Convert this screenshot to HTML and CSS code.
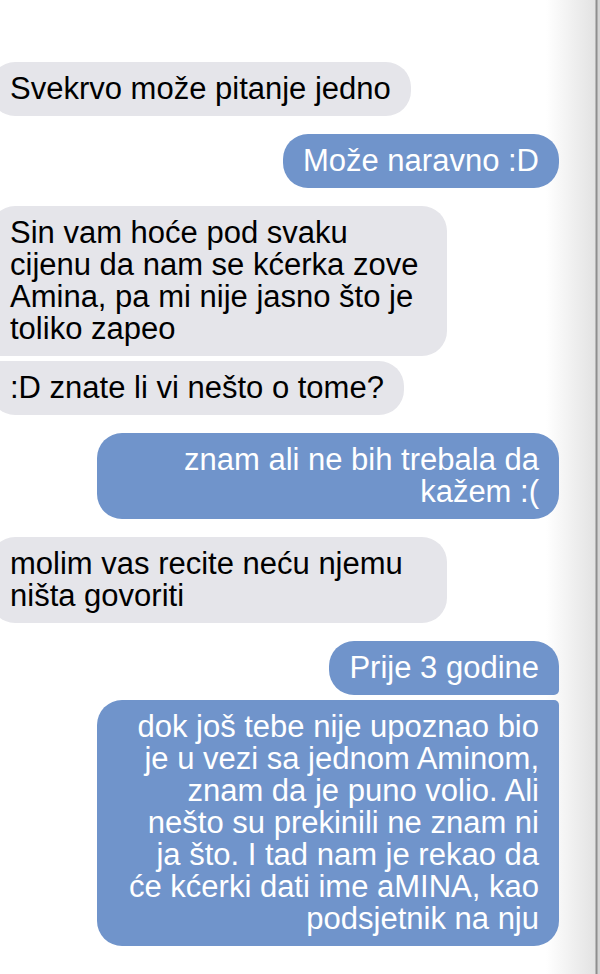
FILE: index.html
```html
<!DOCTYPE html>
<html lang="hr">

<head>
    <meta charset="UTF-8">
    <meta name="viewport" content="width=device-width, initial-scale=1.0">
    <title>Svekrva</title>
    <link rel="stylesheet" href="styles.css">
</head>

<body>
    <div class="chat">
        <div class="msg them">Svekrvo može pitanje jedno</div>
        <div class="msg me">Može naravno :D</div>
        <div class="msg them first">Sin vam hoće pod svaku cijenu da nam se kćerka zove Amina, pa mi nije jasno što je toliko zapeo</div>
        <div class="msg them last">:D znate li vi nešto o tome?</div>
        <div class="msg me">znam ali ne bih trebala da kažem :(</div>
        <div class="msg them">molim vas recite neću njemu ništa govoriti</div>
        <div class="msg me first">Prije 3 godine</div>
        <div class="msg me last">dok još tebe nije upoznao bio je u vezi sa jednom Aminom, znam da je puno volio. Ali nešto su prekinili ne znam ni ja što. I tad nam je rekao da će kćerki dati ime aMINA, kao podsjetnik na nju</div>
    </div>
</body>

</html>
```

FILE: styles.css
```css
html {
    min-height: 100%;
    background: linear-gradient(to right,
            #ffffff 546px,
            #e3e3e3 595px,
            #8e8e8e 596px,
            #8e8e8e 597px,
            #d4d4d4 598px);
}

body {
    margin: 0;
    font-family: "Liberation Sans", Arial, sans-serif;
    font-size: 31px;
    line-height: 32px;
    overflow: hidden;
}

.chat {
    display: flex;
    flex-direction: column;
    padding: 62px 41px 30px 0;
}

.msg {
    box-sizing: border-box;
    padding: 11px 20px;
    border-radius: 25px;
    margin-top: 18px;
}

.msg:first-child {
    margin-top: 0;
}

.them {
    align-self: flex-start;
    max-width: 457px;
    margin-left: -10px;
    background: #e5e5ea;
    color: #000;
}

.me {
    align-self: flex-end;
    max-width: 462px;
    background: #7094cb;
    color: #fff;
    text-align: right;
}

/* consecutive bubbles from the same side */
.last {
    margin-top: 5px;
}

.them.first {
    border-bottom-left-radius: 5px;
}

.them.last {
    border-top-left-radius: 5px;
}

.me.first {
    border-bottom-right-radius: 5px;
}

.me.last {
    border-top-right-radius: 5px;
}
```
